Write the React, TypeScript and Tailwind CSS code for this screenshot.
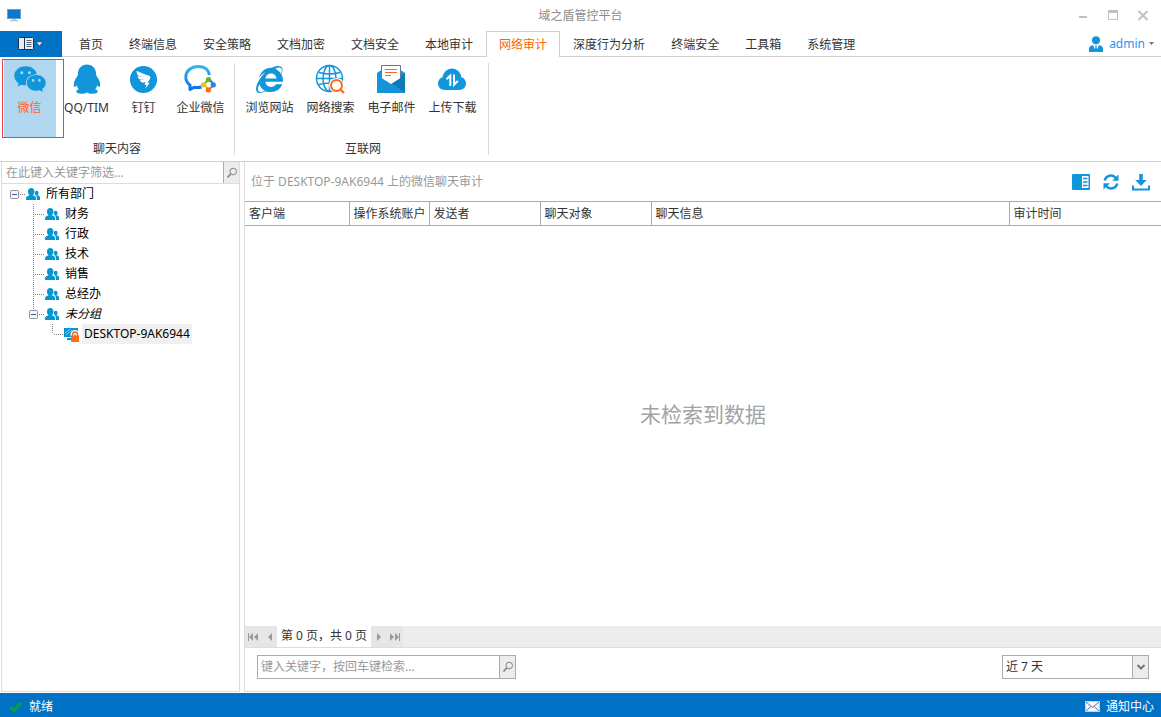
import type { ReactNode } from 'react';
import { FaInternetExplorer } from 'react-icons/fa';
import { AiFillDingtalkCircle, AiFillWechat } from 'react-icons/ai';

const tabs = [
  '首页', '终端信息', '安全策略', '文档加密', '文档安全', '本地审计',
  '网络审计', '深度行为分析', '终端安全', '工具箱', '系统管理',
];

const departments = ['财务', '行政', '技术', '销售', '总经办'];

function MonitorIcon() {
  return (
    <svg width="16" height="14" viewBox="0 0 16 14" aria-hidden="true">
      <rect x="0.5" y="0.5" width="13" height="9" fill="#0a78cc" stroke="#5da4d8" />
      <path d="M5 10h4v1.500H5z" fill="#b9c4cc" />
      <path d="M3 11h8v1.500H3z" fill="#c4c9cc" />
    </svg>
  );
}

function FileMenuIcon() {
  return (
    <svg width="26" height="14" viewBox="0 0 26 14" aria-hidden="true">
      <rect x="0.5" y="0.5" width="15" height="12" rx="1" fill="#e9edf2" stroke="#17324f" />
      <path d="M6.5 1v11" stroke="#17324f" />
      <path d="M8.5 3.5h5M8.5 5.5h5M8.5 7.5h5M8.5 9.5h5" stroke="#5a6675" />
      <path d="M18.500 5h6l-3 4z" fill="#fff" stroke="#17324f" strokeWidth="0.500" />
    </svg>
  );
}

function QqIcon() {
  return (
    <svg width="28" height="30" viewBox="0 0 28 30" fill="#1296db" aria-hidden="true">
      <path d="M14 .5C8.500 .5 5 4.500 5 9.500c0 1-.2 1.600-.6 2.400C2.700 14.300.8 17.500.8 20.500c0 1.500.3 2.400 1 2.400.6 0 1.300-.6 2-1.600.3 1.500 1 2.900 2 4-1.400.4-2.500 1.200-2.500 2.200 0 1.500 2.300 2.200 5.200 2.200 2.300 0 4.300-.5 5.500-1.300 1.200.8 3.200 1.300 5.500 1.300 2.900 0 5.200-.7 5.200-2.200 0-1-1.100-1.800-2.500-2.200 1-1.100 1.700-2.500 2-4 .7 1 1.400 1.600 2 1.600.7 0 1-.9 1-2.400 0-3-1.900-6.200-3.600-8.600-.4-.8-.6-1.400-.6-2.400 0-5-3.500-9-9-9z" />
    </svg>
  );
}

function WeComIcon() {
  return (
    <svg width="34" height="30" viewBox="0 0 34 30" aria-hidden="true">
      <defs>
        <linearGradient id="wecom" x1="0" y1="0" x2="0" y2="1">
          <stop offset="0" stopColor="#35b5f5" />
          <stop offset="1" stopColor="#0d6fe8" />
        </linearGradient>
      </defs>
      <path
        d="M26.500 11C25.500 5 20.500 2.500 15 2.500C8 2.500 2.800 7 2.800 13c0 3.500 1.700 6.200 4.200 8v4.500l4.500-2.300c2.300.5 4.700.5 7-.2"
        fill="none" stroke="url(#wecom)" strokeWidth="3" strokeLinejoin="round"
      />
      <g fill="none" strokeWidth="2.200">
        <path d="M22 19l4-3.500" stroke="#5cb531" />
        <path d="M27 16l4 5" stroke="#2483e6" />
        <path d="M30 22l-4.500 3.500" stroke="#ff6a13" />
        <path d="M25 25l-4-4.500" stroke="#fdbd10" />
      </g>
      <circle cx="25.500" cy="15.500" r="2.600" fill="#5cb531" />
      <circle cx="30.300" cy="20.800" r="2.600" fill="#2483e6" />
      <circle cx="25.300" cy="26" r="2.600" fill="#ff6a13" />
      <circle cx="20.500" cy="20.800" r="2.600" fill="#fdbd10" />
    </svg>
  );
}

function GlobeSearchIcon() {
  return (
    <svg width="30" height="30" viewBox="0 0 30 30" aria-hidden="true">
      <g fill="none" stroke="#1296db" strokeWidth="1.500">
        <circle cx="14.500" cy="14.500" r="13" />
        <ellipse cx="14.500" cy="14.500" rx="6.500" ry="13" />
        <path d="M14.500 2v25M2 14.500h25M4 8.500q10.500 3 21 0M4 20.500q10.500-3 21 0" />
      </g>
      <circle cx="21.500" cy="21.500" r="7.500" fill="#fff" />
      <circle cx="21.500" cy="21.500" r="5.500" fill="#fff" stroke="#ff6a13" strokeWidth="2" />
      <path d="M25.500 25.500l3.500 3.500" stroke="#ff6a13" strokeWidth="2.200" />
    </svg>
  );
}

function MailDocIcon() {
  return (
    <svg width="28" height="30" viewBox="0 0 28 30" aria-hidden="true">
      <path d="M0 9l4.500-3h19L28 9v20H0z" fill="#1296db" />
      <path d="M28 9v20L14 19z" fill="#0d7bba" />
      <path d="M0 29l14-10 14 10z" fill="#1593d8" />
      <path d="M4.500 14V1.500h19V14L14 20z" fill="#fff" />
      <path d="M4.500 14V1.500h19V14" fill="none" stroke="#5f7896" />
      <path d="M8 5.500h12M8 8.500h12M8 11.500h6" stroke="#f0692e" />
    </svg>
  );
}

function CloudTransferIcon() {
  return (
    <svg width="28" height="22" viewBox="0 0 28 22" aria-hidden="true">
      <path
        d="M7 22C3 22 0 19.200 0 15.500c0-3.200 2-5.600 4.600-6.300C5.300 4 9 .5 14 .5s8.700 3.500 9.400 8.700C26 9.900 28 12.300 28 15.500c0 3.700-3 6.500-7 6.500z"
        fill="#1296db"
      />
      <path d="M12.300 18V7.500L8.500 11.200M16 6.500v10.300l3.800-3.800" fill="none" stroke="#fff" strokeWidth="2" />
    </svg>
  );
}

function AdminIcon() {
  return (
    <svg width="14" height="16" viewBox="0 0 14 16" aria-hidden="true">
      <circle cx="7" cy="4.200" r="4" fill="#1296db" />
      <path d="M0 16v-3.500C0 10.500 2 9.500 4 9l3 7 3-7c2 .5 4 1.500 4 3.500V16z" fill="#1296db" />
      <path d="M6 9.500h2l-.5 1.500.9 3L7 16l-1.400-2 .9-3z" fill="#1296db" />
    </svg>
  );
}

function SearchIcon() {
  return (
    <svg width="12" height="12" viewBox="0 0 12 12" fill="none" stroke="#808080" aria-hidden="true">
      <circle cx="7.200" cy="4.500" r="3.300" />
      <path d="M4.700 7L1.500 10.500" strokeWidth="1.600" />
    </svg>
  );
}

function GroupIcon() {
  return (
    <svg width="14" height="13" viewBox="0 0 14 13" className="shrink-0" fill="#0797cf" aria-hidden="true">
      <ellipse cx="5.200" cy="3.700" rx="3.200" ry="3.700" />
      <path d="M0 12V10.500C0 8.700 1.500 8 3.700 7.300V6h3v1.300C9 8 10.200 8.700 10.200 10.500V12z" />
      <ellipse cx="10.700" cy="5" rx="1.900" ry="2.300" />
      <path d="M9.700 7.200h2c1.500.4 2.300 1.200 2.300 2.500V12h-3v-1.700C11 9 10.500 8 9.400 7.500z" />
    </svg>
  );
}

function LockedPcIcon() {
  return (
    <svg width="15" height="15" viewBox="0 0 15 15" className="shrink-0" aria-hidden="true">
      <path d="M0 1h14v9H0z" fill="#0797cf" />
      <path d="M1 6l5-4M2 8l6-5" stroke="#7fd0ef" />
      <path d="M3 11h5v2H3z" fill="#0797cf" />
      <path d="M8.500 9V7.500a2.500 2.500 0 0 1 5 0V9" fill="none" stroke="#fff" strokeWidth="4" />
      <path d="M8.500 9V7.500a2.500 2.500 0 0 1 5 0V9" fill="none" stroke="#ff6a13" strokeWidth="1.500" />
      <rect x="7" y="8.500" width="8" height="6.500" rx="0.500" fill="#ff6a13" />
    </svg>
  );
}

type GuideProps = { expander?: boolean; up?: boolean; down?: boolean };

function TreeGuide({ expander, up, down }: GuideProps) {
  return (
    <svg width="16" height="20" viewBox="0 0 16 20" className="shrink-0" aria-hidden="true">
      <g stroke="#808080" strokeDasharray="1 1">
        {up && <path d="M4.500 0v10" />}
        {down && <path d="M4.500 10v10" />}
        <path d="M6 10.500h9" />
      </g>
      {expander && (
        <>
          <rect x="0.500" y="6.500" width="8" height="8" rx="1" fill="#f6f6f6" stroke="#919191" />
          <path d="M2 10.500h5" stroke="#3c5aa8" />
        </>
      )}
    </svg>
  );
}

function RibbonItem({ icon, label, active, wide }: { icon: ReactNode; label: string; active?: boolean; wide?: boolean }) {
  return (
    <div className={wide ? 'flex w-[61px] justify-center' : 'relative flex w-[57px] justify-center'}>
      <button
        type="button"
        className={
          active
            ? 'flex h-[77px] w-[52px] flex-col items-center bg-[#b1d6f0] text-[#ff6a13]'
            : 'flex h-[77px] flex-col items-center text-[#333]'
        }
      >
        <span className="flex h-[38px] items-center justify-center text-[#1296db]">{icon}</span>
        <span className="leading-5 whitespace-nowrap">{label}</span>
      </button>
      {active && <span className="absolute -top-px left-px h-[79px] w-[62px] border border-[#f04040]" />}
    </div>
  );
}

function RibbonGroup({ title, children }: { title: string; children: ReactNode }) {
  return (
    <section className="mt-[6px] mb-[6px] flex flex-col justify-between border-r border-[#d9d9d9] pr-[5px]">
      <div className="-mt-[3px] flex">{children}</div>
      <h2 className="pl-1 text-center leading-3">{title}</h2>
    </section>
  );
}

function PagerButton({ label, d }: { label: string; d: string }) {
  return (
    <button type="button" aria-label={label} className="flex h-full w-4 items-center justify-center bg-[#e6e6e6]">
      <svg width="11" height="8" viewBox="0 0 11 8" fill="#9a9a9a" aria-hidden="true"><path d={d} /></svg>
    </button>
  );
}

export default function App() {
  return (
    <div className="flex h-screen flex-col overflow-hidden bg-white font-['Noto_Sans','Noto_Sans_CJK_SC',sans-serif] text-[12px] text-[#333]">
      <header className="grid h-[31px] shrink-0 grid-cols-[1fr_auto_1fr] items-center">
        <div className="pl-[7px]"><MonitorIcon /></div>
        <h1 className="leading-5 text-[#8c8c8c]">域之盾管控平台</h1>
        <div className="flex justify-end gap-[10px] pr-2">
          <button type="button" aria-label="最小化" className="flex size-5 items-center justify-center">
            <svg width="12" height="12"><path d="M2 7h8" stroke="#c0c0c0" strokeWidth="2" /></svg>
          </button>
          <button type="button" aria-label="最大化" className="flex size-5 items-center justify-center">
            <svg width="12" height="12" fill="none" stroke="#c0c0c0"><path d="M1.500 1v8.500h9V1" /><path d="M1 1.500h10" strokeWidth="3" /></svg>
          </button>
          <button type="button" aria-label="关闭" className="flex size-5 items-center justify-center">
            <svg width="12" height="12"><path d="M1.500 1l9 9M10.500 1l-9 9" stroke="#c0c0c0" strokeWidth="2" /></svg>
          </button>
        </div>
      </header>

      <nav className="flex h-[26px] shrink-0">
        <button type="button" aria-label="文件" className="flex w-[62px] items-center justify-center bg-[#0072c6]">
          <FileMenuIcon />
        </button>
        <span className="w-1 border-b border-[#d0d0d0]" />
        {tabs.map((tab) => (
          <button
            key={tab}
            type="button"
            className={
              tab === '网络审计'
                ? 'border border-b-0 border-[#d0d0d0] px-3 leading-[25px] whitespace-nowrap text-[#ff6600]'
                : 'border-b border-[#d0d0d0] px-[13px] pt-[3px] leading-[22px] whitespace-nowrap'
            }
          >
            {tab}
          </button>
        ))}
        <span className="flex flex-1 items-center justify-end border-b border-[#d0d0d0] pr-[7px]">
          <button type="button" className="flex items-center text-[#1e96f0]">
            <AdminIcon />
            <span className="ml-[6px] leading-5">admin</span>
            <svg width="5" height="3" className="ml-1"><path d="M0 0h5L2.500 3z" fill="#777" /></svg>
          </button>
        </span>
      </nav>

      <div className="flex h-[105px] shrink-0 border-b border-[#d0d0d0] pl-px">
        <RibbonGroup title="聊天内容">
          <RibbonItem active icon={<AiFillWechat size={36} />} label="微信" />
          <RibbonItem icon={<QqIcon />} label="QQ/TIM" />
          <RibbonItem icon={<AiFillDingtalkCircle size={31} />} label="钉钉" />
          <RibbonItem icon={<WeComIcon />} label="企业微信" />
        </RibbonGroup>
        <div className="flex pl-1">
          <RibbonGroup title="互联网">
            <RibbonItem wide icon={<FaInternetExplorer size={27} />} label="浏览网站" />
            <RibbonItem wide icon={<GlobeSearchIcon />} label="网络搜索" />
            <RibbonItem wide icon={<MailDocIcon />} label="电子邮件" />
            <RibbonItem wide icon={<CloudTransferIcon />} label="上传下载" />
          </RibbonGroup>
        </div>
      </div>

      <div className="flex min-h-0 flex-1 gap-1 pb-px pl-px">
        <aside className="w-[239px] shrink-0 border border-t-0 border-[#dcdcdc]">
          <div className="flex h-[22px] border-b border-[#dcdcdc]">
            <input
              aria-label="筛选部门"
              placeholder="在此键入关键字筛选..."
              className="min-w-0 flex-1 px-1 leading-5 outline-none placeholder:text-[#999]"
            />
            <button type="button" aria-label="筛选" className="flex w-4 items-center justify-center border-l border-[#ababab] bg-[#ececec]">
              <SearchIcon />
            </button>
          </div>
          <ul className="leading-5 text-black">
            <li>
              <div className="flex items-center pl-2">
                <TreeGuide expander />
                <GroupIcon />
                <span className="ml-1 px-[2px]">所有部门</span>
              </div>
              <ul>
                {departments.map((name) => (
                  <li key={name} className="flex items-center pl-[27px]">
                    <TreeGuide up down />
                    <GroupIcon />
                    <span className="ml-1 px-[2px]">{name}</span>
                  </li>
                ))}
                <li>
                  <div className="flex items-center pl-[27px]">
                    <TreeGuide expander up />
                    <GroupIcon />
                    <span className="ml-1 px-[2px] italic">未分组</span>
                  </div>
                  <ul>
                    <li className="flex items-center pl-[46px]">
                      <TreeGuide up />
                      <LockedPcIcon />
                      <span className="ml-[3px] bg-[#f0f0f0] px-[2px]">DESKTOP-9AK6944</span>
                    </li>
                  </ul>
                </li>
              </ul>
            </li>
          </ul>
        </aside>

        <main className="flex min-w-0 flex-1 flex-col border-b border-l border-[#dcdcdc]">
          <div className="flex h-[39px] shrink-0 items-center justify-between pr-[11px] pl-[6px]">
            <h2 className="leading-5 text-[#999]">位于 DESKTOP-9AK6944 上的微信聊天审计</h2>
            <div className="flex gap-3">
              <button type="button" aria-label="详情面板">
                <svg width="18" height="18" viewBox="0 0 18 18">
                  <rect x="0" y="1" width="18" height="16" rx="1" fill="#1296db" />
                  <path d="M10 3h6.500v12H10z" fill="#fff" />
                  <path d="M11 5.500h4.500M11 9h4.500M11 12.500h4.500" stroke="#1296db" strokeWidth="1.500" />
                </svg>
              </button>
              <button type="button" aria-label="刷新">
                <svg width="18" height="18" viewBox="0 0 18 18">
                  <g fill="none" stroke="#1296db" strokeWidth="2.400">
                    <path d="M2.700 7.500A6.300 6.300 0 0 1 13.800 5" />
                    <path d="M15.300 10.500A6.300 6.300 0 0 1 4.200 13" />
                  </g>
                  <path d="M16.500 1.500v6.300h-6.300zM1.500 16.500v-6.300h6.300z" fill="#1296db" />
                </svg>
              </button>
              <button type="button" aria-label="导出">
                <svg width="18" height="18" viewBox="0 0 18 18">
                  <path d="M7.200 1h3.600v6h4L9 13 3.200 7h4z" fill="#1296db" />
                  <path d="M1 12.500v4h16v-4" fill="none" stroke="#1296db" strokeWidth="2" />
                </svg>
              </button>
            </div>
          </div>

          <table className="w-full table-fixed text-left">
            <thead>
              <tr className="h-6 border-y border-[#ababab] leading-5 whitespace-nowrap [&>th]:border-r [&>th]:border-[#ababab] [&>th]:px-1 [&>th]:font-normal">
                <th className="w-[104px]">客户端</th>
                <th className="w-20">操作系统账户</th>
                <th className="w-[111px]">发送者</th>
                <th className="w-[111px]">聊天对象</th>
                <th>聊天信息</th>
                <th className="w-[152px] border-r-0!">审计时间</th>
              </tr>
            </thead>
          </table>

          <p className="flex flex-1 items-center justify-center pb-[22px] text-[21px] text-[#a3a3a3]">未检索到数据</p>

          <div className="flex h-[22px] shrink-0 items-center border-b border-[#dcdcdc] bg-[#ececec]">
            <PagerButton label="第一页" d="M0 0h1v8H0zM5 0v8L1 4zM10 0v8L6 4z" />
            <PagerButton label="上一页" d="M8 0v8L4 4z" />
            <span className="h-full min-w-[94px] bg-white px-[2px] text-center leading-5 whitespace-nowrap">第 0 页，共 0 页</span>
            <PagerButton label="下一页" d="M3 0v8l4-4z" />
            <PagerButton label="最后一页" d="M9 0h1v8H9zM5 0v8l4-4zM0 0v8l4-4z" />
          </div>

          <div className="flex h-[43px] shrink-0 items-center justify-between px-3 pb-[5px]">
            <div className="flex h-6 w-[259px] border border-[#ababab]">
              <input
                aria-label="检索关键字"
                placeholder="键入关键字，按回车键检索..."
                className="min-w-0 flex-1 px-[3px] leading-5 outline-none placeholder:text-[#999]"
              />
              <button type="button" aria-label="检索" className="flex w-4 items-center justify-center border-l border-[#ababab] bg-[#ececec]">
                <SearchIcon />
              </button>
            </div>
            <div className="grid h-6 w-[147px] grid-cols-[1fr_16px] border border-[#ababab]">
              <select aria-label="时间范围" defaultValue="7" className="col-span-2 col-start-1 row-start-1 min-w-0 appearance-none bg-transparent px-[3px] leading-5 outline-none">
                <option value="7">近 7 天</option>
              </select>
              <span className="pointer-events-none col-start-2 row-start-1 flex items-center justify-center border-l border-[#ababab] bg-[#ececec]">
                <svg width="8" height="6" fill="none" stroke="#777" strokeWidth="2"><path d="M0.500 1L4 4.500 7.500 1" /></svg>
              </span>
            </div>
          </div>
        </main>
      </div>

      <footer className="flex h-6 shrink-0 items-center justify-between bg-[#0072c6] pt-[3px] pr-[7px] pl-[9px] leading-5 text-white">
        <span className="flex items-center gap-[6px]">
          <svg width="14" height="12" viewBox="0 0 14 12"><path d="M1.500 6l3.500 3.500L12.500 1.800" fill="none" stroke="#0aa03c" strokeWidth="3.200" /></svg>
          就绪
        </span>
        <button type="button" className="flex items-center gap-[6px]">
          <svg width="15" height="11" viewBox="0 0 15 11">
            <rect x="0.500" y="0.500" width="14" height="10" fill="#f4f6fa" stroke="#c3cfe0" />
            <path d="M1 1l6.500 5.500L14 1M1 10l4.800-4.500M14 10L9.200 5.500" fill="none" stroke="#55749f" />
          </svg>
          通知中心
        </button>
      </footer>
    </div>
  );
}
